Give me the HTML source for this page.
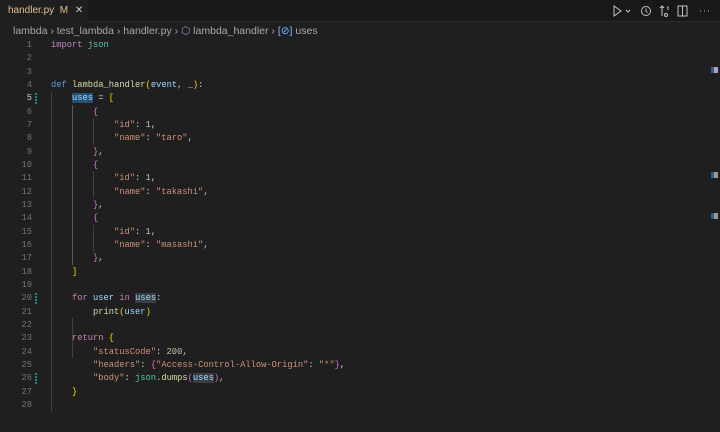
<!DOCTYPE html><html><head><style>
body{margin:0;width:720px;height:432px;background:#1f1f1f;overflow:hidden;position:relative;font-family:"Liberation Sans",sans-serif}
.top{position:absolute;left:0;top:0;width:720px;height:21px;background:#181818;border-bottom:1px solid #2b2b2b}
.tab{position:absolute;left:0;top:0;width:88px;height:22px;background:#1f1f1f;color:#e2c08d;font-size:10px;line-height:21px;padding-left:8px;box-sizing:border-box}
.tab .x{color:#ccc;margin-left:4px}
.bc{position:absolute;left:13px;top:25px;font-size:10.5px;color:#a9a9a9;white-space:pre}
.ln{position:absolute;left:0;width:32px;text-align:right;font:8.75px/13.33px "Liberation Mono",monospace;color:#6e7681;white-space:pre}
.code{position:absolute;left:51px;font:8.75px/13.33px "Liberation Mono",monospace;color:#d4d4d4;white-space:pre}
.k{color:#c586c0}.d{color:#569cd6}.f{color:#dcdcaa}.v{color:#9cdcfe}.s{color:#ce9178}.n{color:#b5cea8}.c{color:#4ec9b0}
.b1{color:#ffd700}.b2{color:#da70d6}.b3{color:#179fff}
.hl{background:#3a3d41}
.g{position:absolute;width:1px;background:#404040}
.mk{position:absolute;left:35px;width:2px;height:11px;background:repeating-linear-gradient(#1b81a8 0 2px,transparent 2px 3px)}
</style></head><body>
<div class="top"></div>
<div class="tab">handler.py&nbsp;&nbsp;M <span class="x">✕</span></div>
<svg style="position:absolute;left:610px;top:3px" width="110" height="16" viewBox="0 0 110 16" fill="none" stroke="#c5c5c5" stroke-width="1">
<path d="M4 3v10l7-5z"/><path d="M16 7l2 2 2-2"/>
<circle cx="36" cy="8" r="4.5"/><path d="M36 5.5v3l1.5 1"/>
<path d="M52 3v10M50 5l2-2 2 2"/><circle cx="56" cy="12" r="1.5"/><path d="M57 4h1v3"/>
<rect x="68" y="3" width="9" height="10"/><path d="M72.5 3v10"/>
<path d="M90 8h1M94 8h1M98 8h1"/></svg>
<div class="bc">lambda › test_lambda › handler.py › <span style="color:#b180d7">⬡</span> lambda_handler › <span style="color:#75beff">[⊘]</span> uses</div>
<div class="g" style="left:51px;top:92px;height:320px"></div>
<div class="g" style="left:72px;top:105px;height:160px;background:#585858"></div>
<div class="g" style="left:93px;top:118px;height:27px"></div>
<div class="g" style="left:93px;top:171px;height:27px"></div>
<div class="g" style="left:93px;top:225px;height:27px"></div>
<div class="g" style="left:72px;top:318px;height:40px"></div>
<div class="mk" style="top:93px"></div><div class="mk" style="top:293px"></div><div class="mk" style="top:373px"></div>
<div style="position:absolute;left:711px;top:67px;width:3px;height:6px;background:#2f5f8f"></div><div style="position:absolute;left:714px;top:67px;width:4px;height:6px;background:#b3a0c8"></div>
<div style="position:absolute;left:711px;top:172px;width:3px;height:6px;background:#2f5f8f"></div><div style="position:absolute;left:714px;top:172px;width:4px;height:6px;background:#999"></div>
<div style="position:absolute;left:711px;top:213px;width:3px;height:6px;background:#2f5f8f"></div><div style="position:absolute;left:714px;top:213px;width:4px;height:6px;background:#999"></div>
<div class="ln" style="top:39px">1
2
3
4
<span style="color:#ccc">5</span>
6
7
8
9
10
11
12
13
14
15
16
17
18
19
20
21
22
23
24
25
26
27
28</div>
<div class="code" style="top:39px"><span class="k">import</span> <span class="c">json</span>


<span class="d">def</span> <span class="f">lambda_handler</span><span class="b1">(</span><span class="v">event</span>, <span class="v">_</span><span class="b1">)</span>:
    <span class="v" style="background:#264f78">uses</span> = <span class="b1">[</span>
        <span class="b2">{</span>
            <span class="s">"id"</span>: <span class="n">1</span>,
            <span class="s">"name"</span>: <span class="s">"taro"</span>,
        <span class="b2">}</span>,
        <span class="b2">{</span>
            <span class="s">"id"</span>: <span class="n">1</span>,
            <span class="s">"name"</span>: <span class="s">"takashi"</span>,
        <span class="b2">}</span>,
        <span class="b2">{</span>
            <span class="s">"id"</span>: <span class="n">1</span>,
            <span class="s">"name"</span>: <span class="s">"masashi"</span>,
        <span class="b2">}</span>,
    <span class="b1">]</span>

    <span class="k">for</span> <span class="v">user</span> <span class="k">in</span> <span class="v hl">uses</span>:
        <span class="f">print</span><span class="b1">(</span><span class="v">user</span><span class="b1">)</span>

    <span class="k">return</span> <span class="b1">{</span>
        <span class="s">"statusCode"</span>: <span class="n">200</span>,
        <span class="s">"headers"</span>: <span class="b2">{</span><span class="s">"Access-Control-Allow-Origin"</span>: <span class="s">"*"</span><span class="b2">}</span>,
        <span class="s">"body"</span>: <span class="c">json</span>.<span class="f">dumps</span><span class="b2">(</span><span class="v hl">uses</span><span class="b2">)</span>,
    <span class="b1">}</span>
</div>
</body></html>
